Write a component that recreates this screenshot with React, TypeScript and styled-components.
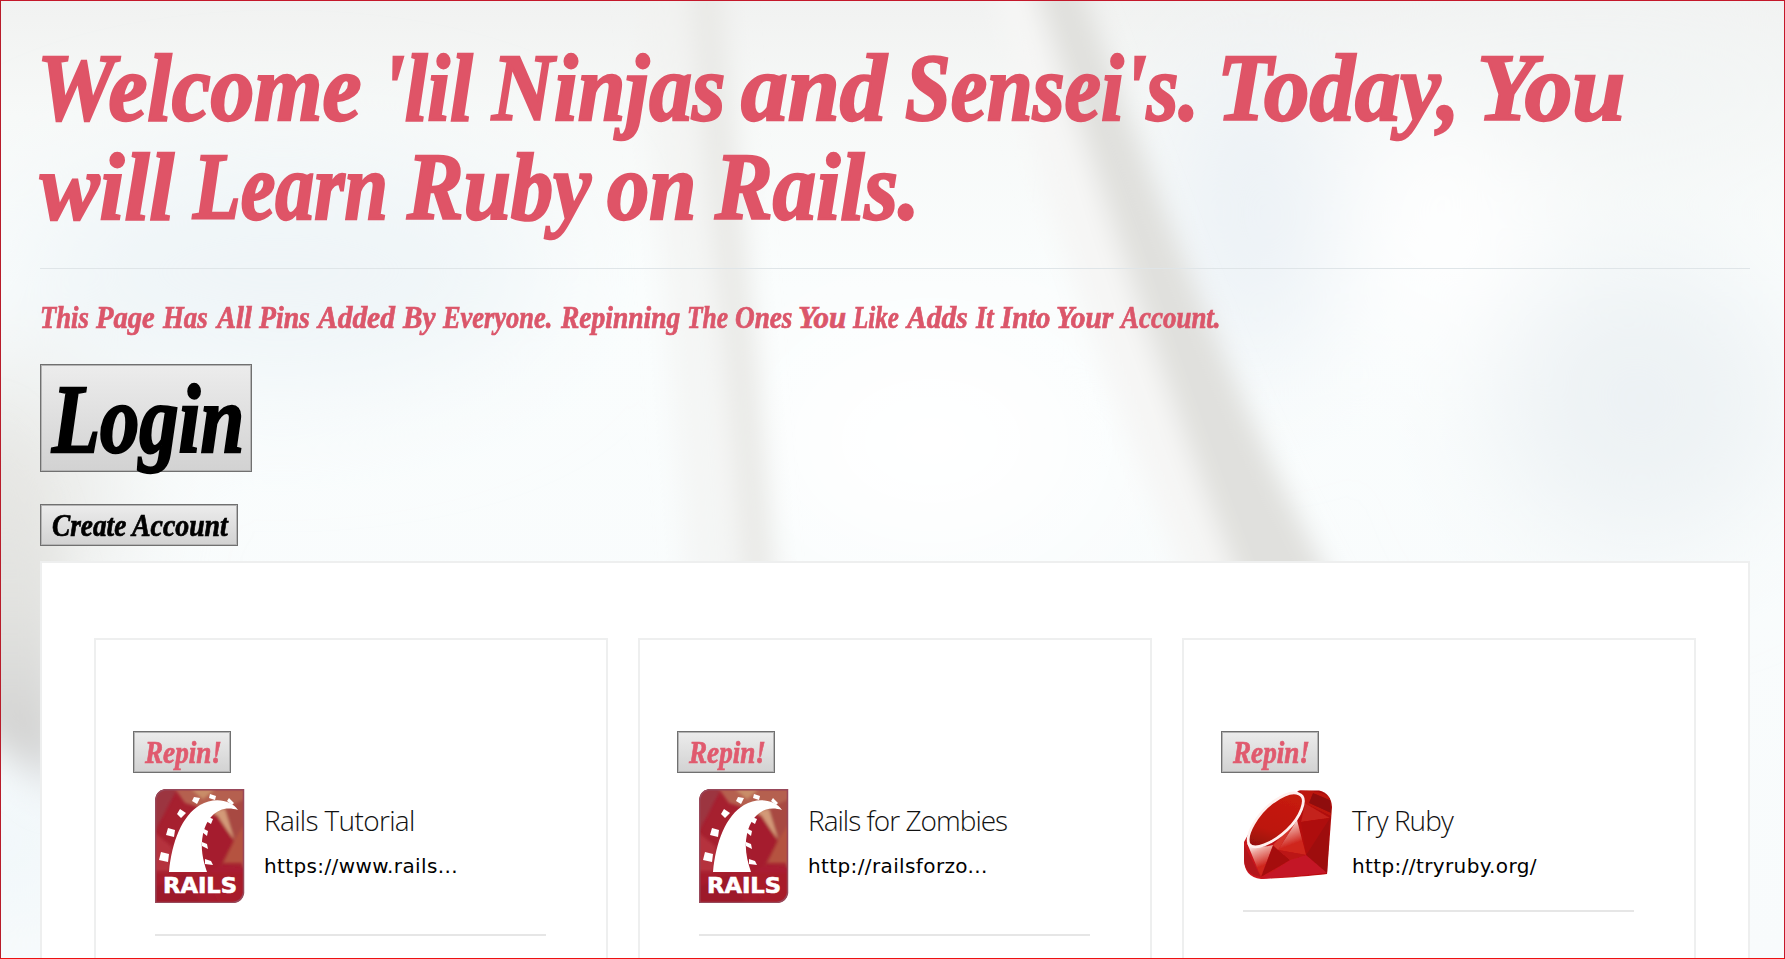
import React, { useLayoutEffect, useRef, useState } from "react";
import styled, { createGlobalStyle } from "styled-components";

const Global = createGlobalStyle`
  *, *::before, *::after { box-sizing: border-box; }
  html, body { margin: 0; height: 959px; overflow: hidden; background: #fbfdfd; }
`;

const Page = styled.div`
  position: relative;
  isolation: isolate;
  height: 959px;
  width: 1785px;
  overflow: hidden;
  padding: 0 34px 0 39px;
  border: 1px solid;
  border-color: #c4182a #c4182a #ee1010 #b81c2a;
`;

const Backdrop = styled.svg`
  position: absolute;
  inset: 0;
  z-index: -1;
`;

const Title = styled.h1`
  margin: 0;
  height: 268px;
  padding-top: 37px;
  border-bottom: 1px solid #dfe5e8;
  font-size: 96px;
  line-height: 99px;
  color: #df5467;
`;

const Subtitle = styled.h3`
  margin: 0 0 28px;
  padding-top: 30px;
  height: 67px;
  font-size: 31px;
  line-height: 37px;
  color: #db566a;
`;

const LineBox = styled.span<{ $stroke: number }>`
  display: flex;
  font-family: "Liberation Serif", serif;
  font-style: italic;
  font-weight: 700;
  white-space: nowrap;
  -webkit-text-stroke: ${(p) => p.$stroke}px currentColor;
`;

const WordBox = styled.span<{ $width: number; $gap: number }>`
  flex: none;
  width: ${(p) => p.$width}px;
  margin-left: ${(p) => p.$gap}px;
`;

const WordInk = styled.span`
  display: inline-block;
  transform-origin: 0 50%;
`;

type Span = [text: string, start: number, end: number];

/* Condenses a word horizontally so that it fills the width it is given. */
function Word({ text, width, gap }: { text: string; width: number; gap: number }) {
  const ref = useRef<HTMLSpanElement>(null);
  const [scale, setScale] = useState(1);
  useLayoutEffect(() => {
    if (ref.current) setScale(width / ref.current.offsetWidth);
  }, [width]);
  return (
    <WordBox $width={width} $gap={gap}>
      <WordInk ref={ref} style={{ transform: `scaleX(${scale})` }}>{text}</WordInk>
    </WordBox>
  );
}

function Script({ words, stroke = 0.7 }: { words: Span[]; stroke?: number }) {
  return (
    <LineBox $stroke={stroke}>
      {words.map(([text, start, end], i) => (
        <Word key={i} text={text} width={end - start} gap={start - (i ? words[i - 1][2] : 0)} />
      ))}
    </LineBox>
  );
}

const titleLines: Span[][] = [
  [["Welcome", -3, 321], ["'lil", 342, 433], ["Ninjas", 452, 685], ["and", 701, 846], ["Sensei's.", 865, 1159], ["Today,", 1177, 1420], ["You", 1437, 1585]],
  [["will", 0, 134], ["Learn", 153, 348], ["Ruby", 367, 551], ["on", 567, 656], ["Rails.", 675, 880]],
];

const subtitleLine: Span[] = [
  ["This", 0, 49], ["Page", 56, 115], ["Has", 123, 168], ["All", 177, 212], ["Pins", 219, 270],
  ["Added", 278, 355], ["By", 363, 395], ["Everyone.", 403, 512], ["Repinning", 521, 640],
  ["The", 647, 688], ["Ones", 695, 752], ["You", 758, 806], ["Like", 813, 859], ["Adds", 867, 928],
  ["It", 936, 954], ["Into", 961, 1010], ["Your", 1016, 1073], ["Account.", 1081, 1181],
];

const Button = styled.button<{ $width: number; $height: number; $size: number; $accent?: boolean }>`
  display: block;
  width: ${(p) => p.$width}px;
  height: ${(p) => p.$height}px;
  margin: 0;
  padding: 2px 0 0 11px;
  border: 1px solid #707070;
  border-radius: 0;
  background: linear-gradient(#ececec, #d2d2d2);
  box-shadow: inset 0 0 0 1px #b4b4b4;
  font-size: ${(p) => p.$size}px;
  line-height: 1.1;
  text-align: left;
  color: ${(p) => (p.$accent ? "#e05a6e" : "#000")};
`;

const Actions = styled.div`
  display: flex;
  flex-direction: column;
  gap: 32px;
  height: 197px;
`;

const Board = styled.main`
  display: flex;
  gap: 30px;
  height: 460px;
  padding: 75px 52px 0;
  border: 2px solid #eeefef;
  background: #fff;
`;

const Card = styled.article`
  flex: 1;
  height: 400px;
  padding: 91px 37px 0;
  border: 2px solid #eeefef;
  background: #fff;
`;

const PinBody = styled.div<{ $height: number }>`
  display: flex;
  gap: 19px;
  height: ${(p) => p.$height}px;
  margin: 16px 23px 0 22px;
  border-bottom: 2px solid #e6e6e6;
`;

const PinText = styled.div`
  padding-top: 12px;
`;

const PinTitle = styled.h4<{ $tracking: number }>`
  margin: 0;
  font: 300 28px/38px "Open Sans", sans-serif;
  letter-spacing: ${(p) => p.$tracking}px;
  color: #111;
`;

const PinUrl = styled.p`
  margin: 8px 0 0;
  font: 400 20px/38px "DejaVu Sans", sans-serif;
  letter-spacing: 0.38px;
  color: #000;
`;

const LogoText = styled.text`
  font: 700 21px "DejaVu Sans", sans-serif;
  fill: #fff;
  stroke: #fff;
  stroke-width: 0.6px;
`;

function RailsLogo() {
  return (
    <svg width="90" height="114" viewBox="0 0 90 114">
      <defs>
        <clipPath id="railsShape"><path d="M10 0H89V104Q87 113 78 114H0V11Q1 2 10 0Z" /></clipPath>
        <filter id="facets"><feGaussianBlur stdDeviation="1.4" /></filter>
        <filter id="inkSoft"><feGaussianBlur stdDeviation=".4" /></filter>
      </defs>
      <g clipPath="url(#railsShape)">
        <rect width="90" height="114" fill="#a6202f" />
        <g filter="url(#facets)">
          <path d="M0 0H22L0 42Z" fill="#9c3440" />
          <path d="M20 0H90V82L78 52L56 22L30 14Z" fill="#b5604f" />
          <path d="M36 0H60L48 10Z" fill="#c98d68" />
          <path d="M64 22L90 10V36L79 52Z" fill="#a84a42" />
          <path d="M58 22L70 20L79 50L62 28Z" fill="#d39a78" />
          <path d="M46 30L62 26L79 52L66 76L50 86Z" fill="#a51e2e" />
          <path d="M79 52L90 34V74H68Z" fill="#b5523f" />
          <path d="M0 44L17 58L14 82H0Z" fill="#b5333d" />
          <path d="M50 84L66 76L90 78V114H64Z" fill="#a91e30" />
          <path d="M0 84H90V114H0Z" fill="#a81b2c" opacity=".8" />
          <path d="M0 98L30 84L46 114H0Z" fill="#8e1a28" opacity=".4" />
        </g>
      </g>
      <path d="M10 .7H88.5V104Q87 112.5 78 113.5H.7V11Q1.500 2 10 .7Z" fill="none" stroke="#98485a" strokeWidth="1.500" />
      <g fill="#fff" filter="url(#inkSoft)">
        <path d="M14 83C17 52 27 27 45 16C58 8 76 10 83 21C65 15 52 27 48 45C45 59 48 71 52 83Z" />
        <path d="M6 63L14 65L13 73L4 71ZM13 39L20 41L19 48L11 46ZM25 20L31 24L26 29L22 25ZM39 8L45 9L42 15L37 12ZM55 5L61 7L60 11L54 9ZM74 9L79 14L77 16L72 12Z" />
        <path d="M53 28L58 30L56 35L51 32ZM49 40L53 42L52 47L47 43ZM47 53L52 55L53 60L47 57ZM50 70L56 72L58 76L50 75Z" />
      </g>
      <LogoText x="8" y="104" textLength="74" lengthAdjust="spacingAndGlyphs">RAILS</LogoText>
    </svg>
  );
}

function RubyLogo() {
  return (
    <svg width="90" height="91" viewBox="0 0 90 91">
      <defs>
        <linearGradient id="gem" x1="0" y1="1" x2="1" y2="0">
          <stop offset="0" stopColor="#d01b24" /><stop offset=".5" stopColor="#b90d0c" /><stop offset="1" stopColor="#a80b08" />
        </linearGradient>
        <linearGradient id="table" x1="0" y1="1" x2=".3" y2="0">
          <stop offset="0" stopColor="#8e1008" /><stop offset=".4" stopColor="#bd1509" /><stop offset="1" stopColor="#c51a10" />
        </linearGradient>
        <linearGradient id="shine" x1=".3" y1="0" x2=".6" y2="1">
          <stop offset="0" stopColor="#fff" /><stop offset=".25" stopColor="#eda39b" /><stop offset=".7" stopColor="#cf251d" />
        </linearGradient>
        <filter id="polish"><feGaussianBlur stdDeviation=".7" /></filter>
      </defs>
      <g filter="url(#polish)">
        <path d="M56 1.500H76Q88 4 89 18L84 85Q60 88 18 90Q1 88 1 70V53L12 33Z" fill="url(#gem)" />
        <path d="M62 14L88 27L87 10Q82 1.500 57 1.500Z" fill="#bd1711" />
        <path d="M70 4L87 11L88 24L66 14Z" fill="#8f0c09" />
        <path d="M62 14L87 29L58 33Z" fill="#c4201a" />
        <path d="M58 33L87 29L63 66Z" fill="#ae0b08" />
        <path d="M87 29L84 85L63 66Z" fill="#9e0a10" />
        <path d="M54 31L63 66L35 61Z" fill="url(#shine)" />
        <path d="M30 56L54 31L35 61Z" fill="#d4362c" />
        <path d="M4 54Q16 60 30 56L18 88Z" fill="url(#shine)" />
        <path d="M1 56L18 88Q2 86 1 71Z" fill="#b3151b" />
        <path d="M30 57L35 61L47 71L18 88Z" fill="#a50d10" />
        <path d="M35 61L63 66L47 71Z" fill="#bb1715" />
        <path d="M47 71L63 66L84 84L18 90Z" fill="#c41425" />
        <path d="M56 5C66 9 57 29 44 41C29 55 11 62 6 55C2 46 14 25 30 13C40 6 50 2 56 5Z" fill="url(#table)" stroke="#fff0ee" strokeWidth="2.800" />
      </g>
    </svg>
  );
}

const pins = [
  { title: "Rails Tutorial", url: "https://www.rails...", logo: "rails", tracking: -0.65 },
  { title: "Rails for Zombies", url: "http://railsforzo...", logo: "rails", tracking: -1 },
  { title: "Try Ruby", url: "http://tryruby.org/", logo: "ruby", tracking: -0.95 },
];

export default function App() {
  return (
    <Page>
      <Global />
      <Backdrop width="1785" height="959" viewBox="0 0 1785 959">
        <defs>
          <linearGradient id="sky" x1="0" y1="0" x2="0" y2="1">
            <stop offset="0" stopColor="#f1f2f1" /><stop offset=".12" stopColor="#f7f9f8" /><stop offset=".3" stopColor="#fafdfd" /><stop offset="1" stopColor="#f8fbfc" />
          </linearGradient>
          <linearGradient id="edge" x1="0" y1="0" x2="0" y2="1">
            <stop offset="0" stopColor="#e4e4e1" stopOpacity="0" /><stop offset=".5" stopColor="#dfdfdc" stopOpacity=".8" /><stop offset=".85" stopColor="#d2d2d1" /><stop offset="1" stopColor="#e6ebef" />
          </linearGradient>
          <filter id="soft" filterUnits="userSpaceOnUse" x="500" y="-100" width="1000" height="859"><feGaussianBlur stdDeviation="13" /></filter>
          <filter id="haze" filterUnits="userSpaceOnUse" x="-200" y="-200" width="2185" height="1359"><feGaussianBlur stdDeviation="60" /></filter>
          <filter id="shade" filterUnits="userSpaceOnUse" x="-200" y="200" width="600" height="759"><feGaussianBlur stdDeviation="18" /></filter>
        </defs>
        <rect width="1785" height="959" fill="url(#sky)" />
        <g filter="url(#haze)">
          <ellipse cx="280" cy="270" rx="270" ry="120" fill="#eff5f8" />
          <ellipse cx="1250" cy="210" rx="75" ry="170" fill="#eaf0f5" />
          <ellipse cx="1640" cy="400" rx="150" ry="150" fill="#edf2f4" />
          <ellipse cx="1600" cy="90" rx="240" ry="55" fill="#f1f4f4" />
          <ellipse cx="930" cy="440" rx="160" ry="110" fill="#ffffff" />
          <ellipse cx="1440" cy="230" rx="90" ry="120" fill="#ffffff" />
          <ellipse cx="0" cy="500" rx="110" ry="130" fill="#e6e6e3" />
          <ellipse cx="0" cy="840" rx="80" ry="70" fill="#edf5f9" />
        </g>
        <path d="M-60 400H10L60 560V800L-60 700Z" fill="url(#edge)" filter="url(#shade)" />
        <g filter="url(#soft)" fill="none">
          <path d="M680 -60C690 100 710 300 735 640" stroke="#f2f2f0" strokeWidth="90" opacity=".6" />
          <path d="M702 -60C710 120 740 300 762 640" stroke="#e8e8e5" strokeWidth="28" />
          <path d="M1020 -60C1050 160 1130 360 1240 640" stroke="#f6f6f5" strokeWidth="60" />
          <path d="M1016 -60C1090 150 1140 330 1260 640H1362C1240 420 1170 230 1064 -60Z" fill="#e0e0dd" />
        </g>
      </Backdrop>
      <Title>
        {titleLines.map((words, i) => <Script key={i} words={words} stroke={2.4} />)}
      </Title>
      <Subtitle><Script words={subtitleLine} /></Subtitle>
      <Actions>
        <Button $width={212} $height={108} $size={97}>
          <Script words={[["Login", 0, 192]]} stroke={2.4} />
        </Button>
        <Button $width={198} $height={42} $size={31}>
          <Script words={[["Create", 0, 74], ["Account", 80, 176]]} />
        </Button>
      </Actions>
      <Board>
        {pins.map((pin) => (
          <Card key={pin.title}>
            <Button $width={98} $height={42} $size={31} $accent>
              <Script words={[["Repin!", 0, 77]]} />
            </Button>
            <PinBody $height={pin.logo === "rails" ? 147 : 123}>
              {pin.logo === "rails" ? <RailsLogo /> : <RubyLogo />}
              <PinText>
                <PinTitle $tracking={pin.tracking}>{pin.title}</PinTitle>
                <PinUrl>{pin.url}</PinUrl>
              </PinText>
            </PinBody>
          </Card>
        ))}
      </Board>
    </Page>
  );
}
